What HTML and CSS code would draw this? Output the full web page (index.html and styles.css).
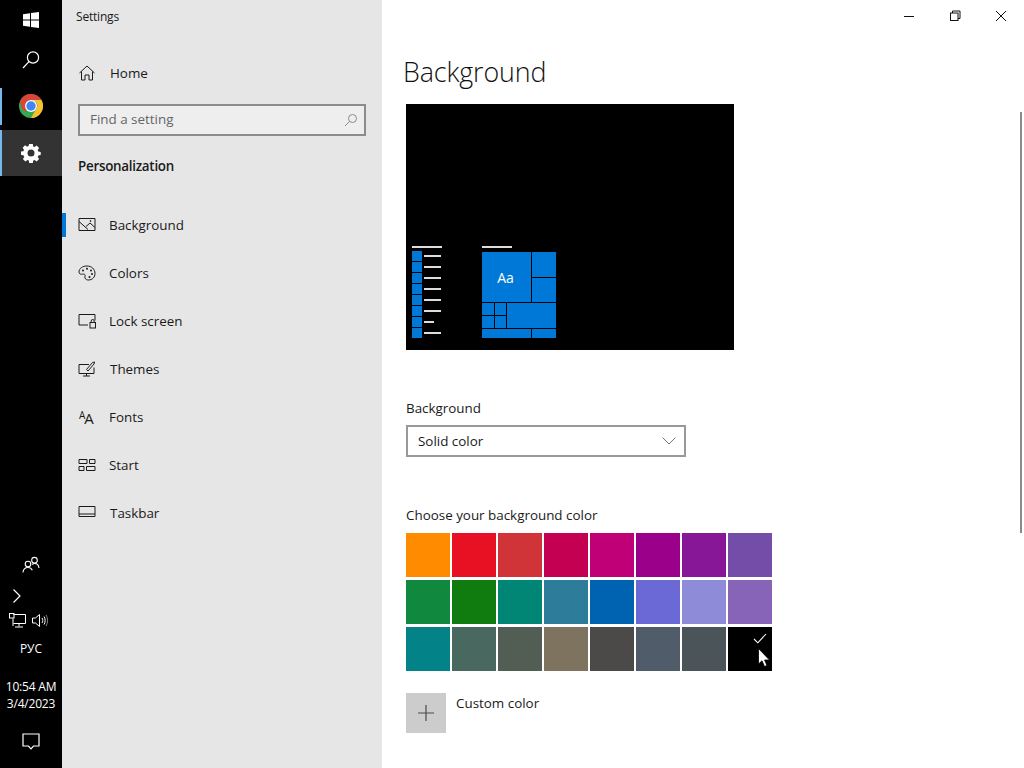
FILE: index.html
```html
<!DOCTYPE html>
<html lang="en">
<head>
<meta charset="utf-8">
<title>Settings</title>
<link rel="stylesheet" href="styles.css">
</head>
<body>
<div class="desktop">
  <aside class="taskbar">
    <div class="tb-top">
      <div class="tb-btn tb-start">
        <svg width="18" height="18" viewBox="0 0 18 18"><path fill="#fff" d="M1 3.2 8 2.2V8.500H1ZM9 2 17 1V8.500H9ZM1 9.500H8V15.800L1 14.800ZM9 9.500H17V17L9 15.900Z"/></svg>
      </div>
      <div class="tb-btn tb-search">
        <svg width="20" height="20" viewBox="0 0 20 20" fill="none" stroke="#fff" stroke-width="1.2"><circle cx="12" cy="7.500" r="5.600"/><path d="M8 11.600 2 18"/></svg>
      </div>
      <div class="tb-btn tb-chrome">
        <svg width="24" height="24" viewBox="0 0 24 24">
          <circle cx="12" cy="12" r="12" fill="#34a853"/>
          <path fill="#db4437" d="M12 0A12 12 0 0 1 22.400 6H12A6 6 0 0 0 6.600 9.400L1.900 5.400A12 12 0 0 1 12 0Z"/>
          <path fill="#db4437" d="M1.600 6A12 12 0 0 0 6.800 18L9 13 5 6Z"/>
          <path fill="#fbc02d" d="M22.400 6A12 12 0 0 1 12 24L17.200 15A6 6 0 0 0 17 8L12 6Z"/>
          <circle cx="12" cy="12" r="6" fill="#fff"/>
          <circle cx="12" cy="12" r="4.700" fill="#4285f4"/>
        </svg>
      </div>
      <div class="tb-btn tb-app tb-active">
        <svg width="20" height="20" viewBox="0 0 20 20"><path fill="#fff" fill-rule="evenodd" d="M8.200 1h3.600l.4 2.400 1.400.6 2-1.400 2.500 2.500-1.400 2 .6 1.400 2.400.4v3.200l-2.400.4-.6 1.400 1.400 2-2.500 2.500-2-1.400-1.400.6-.4 2.400H8.200l-.4-2.400-1.400-.6-2 1.400-2.500-2.500 1.400-2-.6-1.400L0 11.800V8.600l2.400-.4.6-1.400-1.400-2 2.500-2.500 2 1.400 1.400-.6ZM10 6.600a3.500 3.500 0 1 0 0 7 3.500 3.500 0 0 0 0-7Z"/></svg>
      </div>
    </div>
    <div class="tb-bottom">
      <div class="tb-people">
        <svg width="18" height="18" viewBox="0 0 18 18" fill="none" stroke="#fff" stroke-width="1.1"><circle cx="6" cy="8" r="2.800"/><circle cx="12.500" cy="4.200" r="2.800"/><path d="M1 16.500c0-3.200 2-5 5-5 1.800 0 3.500 1 4.300 2.800M10.200 8.500c.8-.7 1.500-1 2.500-1 2.500 0 4 1.800 4.300 4.500"/></svg>
      </div>
      <div class="tb-chevron">
        <svg width="10" height="16" viewBox="0 0 10 16" fill="none" stroke="#fff" stroke-width="1.2"><path d="M1.500 1.500 8 8 1.500 14.500"/></svg>
      </div>
      <div class="tb-tray">
        <svg width="17" height="15" viewBox="0 0 17 15" fill="none" stroke="#fff" stroke-width="1"><path d="M4.500 1.500H16.500V10.500H4.500M10 10.500V13.500M6 14H14M4 5.500V13"/><rect x=".5" y=".5" width="4.500" height="4.500"/></svg>
        <svg width="17" height="15" viewBox="0 0 17 15" fill="none" stroke="#fff" stroke-width="1"><path d="M.5 5H3.500L7.500 1.500V13.500L3.500 10H.5Z"/><path d="M10 5C11 6.500 11 8.500 10 10M12 3.500C13.500 5.500 13.500 9.500 12 11.500"/><path stroke="#888" d="M14 2C16 5 16 10 14 13"/></svg>
      </div>
      <div class="tb-lang">РУС</div>
      <div class="tb-clock"><span>10:54 AM</span><span>3/4/2023</span></div>
      <div class="tb-notify">
        <svg width="18" height="17" viewBox="0 0 18 17" fill="none" stroke="#fff" stroke-width="1.200"><path d="M1 1H17V13H11.500L9 15.800 6.500 13H1Z"/></svg>
      </div>
    </div>
  </aside>

  <nav class="nav">
    <div class="nav-title">Settings</div>
    <a class="nav-home">
      <svg class="ico" width="18" height="18" viewBox="0 0 18 18" fill="none" stroke="#1a1a1a" stroke-width="1"><path d="M1.500 9 9 2l7.500 7M3.500 7.500V16H7V11H11V16H14.500V7.500"/></svg>
      <span>Home</span>
    </a>
    <div class="search"><span>Find a setting</span>
      <svg width="14" height="14" viewBox="0 0 14 14" fill="none" stroke="#8a8a8a" stroke-width="1"><circle cx="8.500" cy="5.500" r="4"/><path d="M5.500 8.500 1 13"/></svg>
    </div>
    <div class="nav-section">Personalization</div>
    <ul class="nav-list">
      <li class="nav-item selected">
        <svg class="ico" width="18" height="16" viewBox="0 0 18 16" fill="none" stroke="#1a1a1a" stroke-width="1"><path d="M1 1.500H17V13.500H1ZM1 4.500 10 12.500M8 9.500 12 6 17 10.500"/><circle cx="12.500" cy="4" r=".5"/></svg>
        <span>Background</span>
      </li>
      <li class="nav-item">
        <svg class="ico" width="18" height="16" viewBox="0 0 18 16" fill="none" stroke="#1a1a1a" stroke-width="1"><path d="M9 1C4.500 1 1 3.500 1 7c0 1.500 1 2.200 2.500 2.200 1.500 0 3-.4 3.500.6.500 1-.5 2 0 3.200.5 1.500 2 2 3.500 2 4 0 6.500-3 6.500-6.500C17 4 13.500 1 9 1Z"/><g fill="#1a1a1a" stroke="none"><circle cx="5" cy="5.500" r="1"/><circle cx="9" cy="3.800" r="1"/><circle cx="13" cy="5.500" r="1"/><circle cx="14" cy="9" r="1"/><circle cx="11.500" cy="12" r="1"/></g></svg>
        <span>Colors</span>
      </li>
      <li class="nav-item">
        <svg class="ico" width="18" height="16" viewBox="0 0 18 16" fill="none" stroke="#1a1a1a" stroke-width="1"><path d="M10 12H1V1.500H17V7.500"/><rect x="12" y="9.500" width="5.500" height="5.500"/><path d="M13.200 9.500V8a1.500 1.500 0 0 1 3 0V9.500"/></svg>
        <span>Lock screen</span>
      </li>
      <li class="nav-item">
        <svg class="ico" width="18" height="16" viewBox="0 0 18 16" fill="none" stroke="#1a1a1a" stroke-width="1"><path d="M11 3.500H1V12.500H16V6.500M8.500 12.500V15M5 15H12"/><path d="M8.500 8.500 14.500 1.500 16.500 1 16 3 10 10Z"/></svg>
        <span class="shift">Themes</span>
      </li>
      <li class="nav-item">
        <span class="ico font-ico"><span class="aa-small">A</span><span class="aa-big">A</span></span>
        <span>Fonts</span>
      </li>
      <li class="nav-item">
        <svg class="ico" width="18" height="16" viewBox="0 0 18 16" fill="none" stroke="#1a1a1a" stroke-width="1"><path d="M1 2.500H9V6.500H1ZM11.500 2.500H17V6.500H11.500ZM1 9.500H6V13.500H1ZM8.500 9.500H17V13.500H8.500Z"/></svg>
        <span>Start</span>
      </li>
      <li class="nav-item">
        <svg class="ico" width="18" height="16" viewBox="0 0 18 16" fill="none" stroke="#1a1a1a" stroke-width="1"><path d="M1 1.500H17V11.500H1ZM1 9H17"/></svg>
        <span class="shift">Taskbar</span>
      </li>
    </ul>
  </nav>

  <main class="main">
    <div class="winbar">
      <button class="winbtn"><svg width="12" height="12" viewBox="0 0 12 12" stroke="#111" fill="none"><path d="M1 6.500H11"/></svg></button>
      <button class="winbtn"><svg width="12" height="12" viewBox="0 0 12 12" stroke="#111" fill="none"><rect x="1.500" y="3" width="7.500" height="7.500"/><path d="M3.500 3V1H11V8.500H9"/></svg></button>
      <button class="winbtn"><svg width="12" height="12" viewBox="0 0 12 12" stroke="#111" fill="none"><path d="M1 1 11 11M11 1 1 11"/></svg></button>
    </div>
    <h1 class="page-title">Background</h1>
    <div class="preview">
      <div class="pv-start">
        <div class="pv-bar"></div>
        <div class="pv-row"><i></i><b></b></div>
        <div class="pv-row"><i></i><b></b></div>
        <div class="pv-row"><i></i><b></b></div>
        <div class="pv-row"><i></i><b></b></div>
        <div class="pv-row"><i></i><b></b></div>
        <div class="pv-row"><i></i><b></b></div>
        <div class="pv-row"><i></i><b class="short"></b></div>
        <div class="pv-row"><i></i><b></b></div>
      </div>
      <div class="pv-right">
        <div class="pv-bar"></div>
        <div class="pv-tiles">
          <div class="t t-aa">Aa</div>
          <div class="t t-r1"></div>
          <div class="t t-r2"></div>
          <div class="t t-s1"></div>
          <div class="t t-s2"></div>
          <div class="t t-s3"></div>
          <div class="t t-s4"></div>
          <div class="t t-wide"></div>
          <div class="t t-b1"></div>
          <div class="t t-b2"></div>
        </div>
      </div>
    </div>
    <label class="field-label">Background</label>
    <div class="select"><span>Solid color</span>
      <svg width="14" height="8" viewBox="0 0 14 8" fill="none" stroke="#777" stroke-width="1"><path d="M.5 .5 7 7 13.500 .5"/></svg>
    </div>
    <div class="color-label">Choose your background color</div>
    <div class="swatches">
      <div class="sw c1"></div><div class="sw c2"></div><div class="sw c3"></div><div class="sw c4"></div>
      <div class="sw c5"></div><div class="sw c6"></div><div class="sw c7"></div><div class="sw c8"></div>
      <div class="sw c9"></div><div class="sw c10"></div><div class="sw c11"></div><div class="sw c12"></div>
      <div class="sw c13"></div><div class="sw c14"></div><div class="sw c15"></div><div class="sw c16"></div>
      <div class="sw c17"></div><div class="sw c18"></div><div class="sw c19"></div><div class="sw c20"></div>
      <div class="sw c21"></div><div class="sw c22"></div><div class="sw c23"></div>
      <div class="sw c24">
        <svg class="check" width="14" height="11" viewBox="0 0 14 11" fill="none" stroke="#fff" stroke-width="1.100"><path d="M1 6 4.800 9.800 13 1"/></svg>
      </div>
    </div>
    <div class="custom">
      <div class="custom-box"><svg width="16" height="16" viewBox="0 0 16 16" stroke="#4a4a4a" stroke-width="1.200"><path d="M8 0V16M0 8H16"/></svg></div>
      <span>Custom color</span>
    </div>
    <div class="scrollbar"></div>
    <svg class="cursor" width="13" height="20" viewBox="0 0 13 20"><path d="M.5 .5V16L4 12.800 6.500 18.500 9 17.500 6.600 12H11.500Z" fill="#fff" stroke="#000" stroke-width=".8"/></svg>
  </main>
</div>
</body>
</html>
```
FILE: styles.css
```css
* { box-sizing: border-box; }
html, body { margin: 0; height: 100%; }
body {
  font-family: "Open Sans", "Noto Sans", sans-serif;
  font-size: 13.4px;
  color: #1a1a1a;
  background: #fff;
  overflow: hidden;
}
.desktop { display: flex; width: 1024px; height: 768px; }

/* Taskbar */
.taskbar {
  width: 62px;
  flex: none;
  background: #000;
  color: #fff;
  display: flex;
  flex-direction: column;
  justify-content: space-between;
}
.tb-top { display: flex; flex-direction: column; }
.tb-btn { display: flex; align-items: center; justify-content: center; }
.tb-start { height: 40px; }
.tb-search { height: 40px; }
.tb-app { height: 46px; }
.tb-chrome { height: 37px; margin-top: 8px; margin-bottom: 5px; padding-bottom: 1px; box-shadow: inset 2px 0 0 #76b9ed; }
.tb-active { background: #333; box-shadow: inset 2px 0 0 #76b9ed; }
.tb-bottom { display: flex; flex-direction: column; align-items: center; padding-bottom: 18px; }
.tb-people { height: 18px; margin-bottom: 14px; display: flex; }
.tb-chevron { align-self: flex-start; margin-left: 12px; height: 16px; display: flex; margin-bottom: 9px; }
.tb-tray { display: flex; gap: 6px; height: 15px; margin-bottom: 12px; margin-left: -4px; }
.tb-lang { font-size: 12px; line-height: 17px; margin-bottom: 21px; }
.tb-clock { display: flex; flex-direction: column; align-items: center; font-size: 12px; line-height: 17px; margin-bottom: 21px; letter-spacing: -.2px; }
.tb-notify { height: 17px; display: flex; }

/* Navigation */
.nav {
  width: 320px;
  flex: none;
  background: #e6e6e6;
  display: flex;
  flex-direction: column;
}
.nav-title { font-size: 12px; line-height: 16px; padding: 9px 0 0 14px; height: 49px; letter-spacing: -.2px; }
.nav-home { display: flex; align-items: center; height: 48px; padding-left: 16px; }
.nav-home span { margin-left: 14px; }
.ico { flex: none; }
.search {
  margin: 7px 16px 0;
  height: 32px;
  border: 2px solid #8c8c8c;
  background: #eeeeee;
  padding: 0 6px 0 10px;
  display: flex;
  align-items: center;
  justify-content: space-between;
  color: #666;
}
.search span { margin-bottom: 2px; }
.nav-section { font-weight: 600; margin: 18px 0 0 16px; line-height: 24px; letter-spacing: -.27px; }
.nav-list { list-style: none; margin: 23px 0 0; padding: 0; }
.nav-item { display: flex; align-items: center; height: 48px; padding-left: 16px; position: relative; }
.nav-item > span:last-child { margin-left: 13px; }
.nav-item > span.shift { margin-left: 14px; }
.nav-item.selected::before {
  content: "";
  position: absolute;
  left: 0; top: 12px;
  width: 4px; height: 24px;
  background: #0078d7;
}
.font-ico { width: 18px; height: 18px; display: flex; align-items: flex-end; line-height: 1; }
.aa-small { font-size: 10px; margin-bottom: 6px; margin-left: 1px; }
.aa-big { font-size: 15px; margin-left: -1px; }

/* Main */
.main { flex: 1; position: relative; padding-left: 24px; display: flex; flex-direction: column; align-items: flex-start; }
.winbar { align-self: flex-end; display: flex; height: 32px; }
.winbtn { width: 46px; height: 32px; border: 0; background: none; padding: 0; display: flex; align-items: center; justify-content: center; }
.page-title { margin: 20px 0 0 -3px; font-size: 26.8px; font-weight: 300; line-height: 40px; height: 52px; letter-spacing: -.1px; color: #111; }
.preview { width: 328px; height: 246px; background: #000; display: flex; align-items: flex-start; gap: 40px; padding: 142px 0 0 6px; }
.pv-start { width: 30px; }
.pv-bar { height: 2px; width: 30px; background: #ddd; }
.pv-row { display: flex; align-items: flex-start; gap: 2px; height: 11px; }
.pv-start .pv-bar { margin-bottom: 3px; }
.pv-row i { width: 10px; height: 10px; background: #0078d7; }
.pv-row b { width: 17px; height: 2px; margin-top: 4px; background: #ddd; }
.pv-row b.short { width: 10px; }
.pv-right { width: 74px; }
.pv-right .pv-bar { margin-bottom: 4px; }
.pv-tiles {
  display: grid;
  width: 74px;
  height: 86px;
  grid-template-columns: 12px 11px 24px 24px;
  grid-template-rows: 25px 24px 12px 12px 9px;
  gap: 1px;
}
.t { background: #0078d7; }
.t-aa { grid-column: 1 / 4; grid-row: 1 / 3; display: flex; align-items: center; justify-content: center; color: #fff; font-size: 14px; padding-right: 2px; }
.t-r1 { grid-column: 4; grid-row: 1; }
.t-r2 { grid-column: 4; grid-row: 2; }
.t-s1 { grid-column: 1; grid-row: 3; }
.t-s2 { grid-column: 2; grid-row: 3; }
.t-s3 { grid-column: 1; grid-row: 4; }
.t-s4 { grid-column: 2; grid-row: 4; }
.t-wide { grid-column: 3 / 5; grid-row: 3 / 5; }
.t-b1 { grid-column: 1 / 4; grid-row: 5; }
.t-b2 { grid-column: 4; grid-row: 5; }

.field-label { margin-top: 48px; line-height: 20px; }
.select {
  margin-top: 7px;
  width: 280px;
  height: 32px;
  border: 2px solid #999;
  padding: 0 8px 0 10px;
  display: flex;
  align-items: center;
  justify-content: space-between;
}
.color-label { margin-top: 48px; line-height: 20px; }
.swatches { margin-top: 8px; display: grid; grid-template-columns: repeat(8, 44px); grid-auto-rows: 44px; column-gap: 2px; row-gap: 3px; }
.sw { position: relative; }
.check { position: absolute; right: 5px; top: 6px; }
.c1 { background: #ff8c00; } .c2 { background: #e81123; } .c3 { background: #d13438; } .c4 { background: #c30052; }
.c5 { background: #bf0077; } .c6 { background: #9a0089; } .c7 { background: #881798; } .c8 { background: #744da9; }
.c9 { background: #10893e; } .c10 { background: #107c10; } .c11 { background: #018574; } .c12 { background: #2d7d9a; }
.c13 { background: #0063b1; } .c14 { background: #6b69d6; } .c15 { background: #8e8cd8; } .c16 { background: #8764b8; }
.c17 { background: #038387; } .c18 { background: #486860; } .c19 { background: #525e54; } .c20 { background: #7e735f; }
.c21 { background: #4c4a48; } .c22 { background: #515c6b; } .c23 { background: #4a5459; } .c24 { background: #000; }
.custom { margin-top: 22px; display: flex; gap: 10px; align-items: flex-start; }
.custom-box { width: 40px; height: 40px; background: #cccccc; display: flex; align-items: center; justify-content: center; }
.custom span { line-height: 20px; }
.scrollbar { position: absolute; right: 2px; top: 112px; width: 2px; height: 421px; background: #8a8a8a; }
.cursor { position: absolute; left: 376px; top: 648px; }
```
